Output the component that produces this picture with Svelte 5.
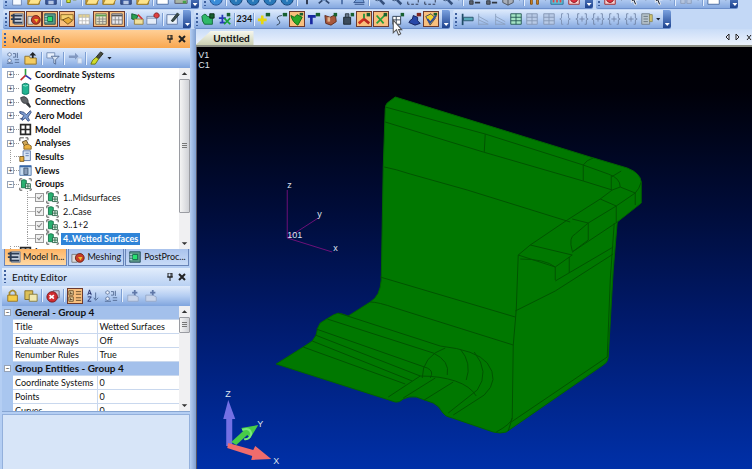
<script>
  // every icon is a list of [path, fill, stroke] on a 16x16 grid
  const icons = {
    page: [['M3 1h7l3 3v11H3z', '#f8fbff', '#6580b0'], ['M10 1v3h3', 'none', '#6580b0']],
    open: [['M1 4h5l1 2h7v8H1z', '#e0a830', '#8a6a20'], ['M1 14l3-6h12l-3 6z', '#ffe48a', '#9a7822']],
    save: [['M2 2h12v12H2z', '#3c5a9c', '#22386c'], ['M5 2h7v5H5z', '#d8e4f4', 'none'], ['M5 10h6v4H5z', '#b8c8e4', 'none']],
    link: [['M2 8h4v4H2zM9 5h4v4H9z', '#d8e83c', '#6c7c10'], ['M6 9l3-2', 'none', '#6c7c10']],
    window: [['M1 3h13v11H1z', '#fff', '#44679e'], ['M1 3h13v3H1z', '#5b8bd0', 'none']],
    print: [['M4 2h8v5H4z', '#fff', '#777'], ['M1 7h14v6H1z', '#a8b4a4', '#556'], ['M10 10h4v3h-4z', '#48a048', 'none']],
    globe: [['M8 1a7 7 0 1 0 .1 0z', '#3a8cd8', '#1a4c90'], ['M4 5l4-2 1 4-3 4z', '#bfe4f8', 'none']],
    ball: [['M8 1a7 7 0 1 0 .1 0z', '#2878b8', '#0c3a70'], ['M5 8h6M8 5v6', 'none', '#d8f0ff']],
    plus: [['M8 2v12M2 8h12', 'none', '#20283c', 2]],
    axes: [['M8 8V1M8 8l-6 5M8 8l6 5', 'none', '#304870', 2], ['M6 6h4v4H6z', '#88aee0', 'none']],
    lamp: [['M5 3h6v5H5z', '#a8c4e8', '#4a6ca4'], ['M8 9v5', 'none', '#4a6ca4', 2]],
    plane: [['M2 12l8-9 4 9z', '#78a0d8', '#33548c'], ['M3 14h11', 'none', '#23447c']],
    zoom: [['M6 2a4 4 0 1 0 .1 0z', '#d8ecff', '#35507c'], ['M9 9l5 5', 'none', '#35507c', 3]],
    dashbox: [['M2 3h3M7 3h3M12 3h2v3M14 9v3M14 14h-3M9 14H6M4 14H2v-3M2 8V5', 'none', '#222c44']],
    tools: [['M3 3h4v4H3zM3 10h4v4H3z', '#5d6470', '#30363f'], ['M9 5h6M9 12h6', 'none', '#30363f', 2]],
    cube: [['M8 2l6 3v7l-6 3-6-3V5z', '#a8aeb8', '#484e58'], ['M2 5l6 3 6-3M8 8v7', 'none', '#484e58']],
    pins: [['M3 3h4v4H6v7H4V7H3zM10 3h4v4h-1v7h-2V7h-1z', '#e09028', '#7c4808']],
    chart: [['M1 2h14v12H1z', '#58c4dc', '#2a6890'], ['M4 12V7M8 12V4M12 12V9', 'none', '#e04848', 2]],
    stop: [['M2 2h12v12H2z', '#f4d0d0', '#a02020'], ['M8 4a4 4 0 1 0 .1 0z', '#e03040', '#801018']],
    cursor: [['M5 1l8 8H9l2 5-2 1-2-5-2 2z', '#202838', '#fff']],
    faded: [['M2 5h5v8H2zM9 5h5v8H9z', '#b4c4de', '#8c9cb8'], ['M5 2h6', 'none', '#8c9cb8']],
    tree: [['M5 2h10v12H5z', '#c4cedc', '#707c90'], ['M1 4h13M1 8h12M4 12h10M4 2v11', 'none', '#2c3c54', 2]],
    mesh: [['M1 5h6v9H1z', '#dcdcdc', '#777'], ['M10 4a5 5 0 1 0 .1 0z', '#c83c28', '#642010'], ['M8 8l3 4 2-4z', '#f0c030', 'none']],
    post: [['M2 2h12v12H2z', '#5c9a88', '#244c5c'], ['M5 5h6v6H5z', '#28e070', '#106048'], ['M2 5h3M2 8h3M2 11h3', 'none', '#c0dce8']],
    form: [['M1 3h14v6H1z', '#f4d070', '#8a6420'], ['M3 9l7-3 4 4-5 4z', '#e8ac38', '#6a4c18']],
    grid: [['M2 3h12v11H2z', '#fff', '#aaa'], ['M2 3h12v3H2z', '#e8d48c', '#bba'], ['M2 10h12M6 3v11M10 3v11', 'none', '#bbb']],
    gridgrn: [['M2 2h12v12H2z', '#e4e4c8', '#706850'], ['M2 4h12', 'none', '#60a050', 2], ['M6 5v9M10 5v9M3 8h11M3 11h11', 'none', '#888']],
    gridgry: [['M2 2h12v12H2z', '#e8e8ee', '#5c5c68'], ['M2 4h12', 'none', '#555', 2], ['M6 5v9M10 5v9M3 9h11', 'none', '#888']],
    flag: [['M2 2l7 2-2 5-5-1z', '#28a050', '#0c5830'], ['M5 8h10v6H5z', '#f0e09c', '#907838'], ['M9 3l5 5', 'none', '#d03838', 2]],
    pinred: [['M1 5h11v9H1z', '#e4ecf8', '#6c84ac'], ['M12 1a3 3 0 1 0 .1 0z', '#e04040', '#801818'], ['M1 7h11', 'none', '#6c84ac']],
    note: [['M1 3h12v11H1z', '#e8f0fa', '#5c74a0'], ['M6 10l7-9 2 2-7 8z', '#3c4c50', '#20302c']],
    surf: [['M1 5q4-5 6 0l6 1v8H4q-3-3-3-9z', '#30b868', '#0c6434'], ['M10 2h5v5h-5z', '#186030', '#082810']],
    move: [['M5 3v9M1 7h8M2 12h6', 'none', '#2838b8', 2], ['M7 7l7 7M14 7l-7 7', 'none', '#18a038', 2], ['M10 1h4v4h-4z', '#186030', 'none']],
    yplus: [['M6 4v10M1 9h10', 'none', '#e8d810', 3], ['M10 1h5v4h-5z', '#186030', 'none']],
    curve: [['M9 4q-8 1-4 5t-2 6', 'none', '#283848', 1], ['M10 1h5v4h-5z', '#186030', 'none']],
    green: [['M1 4l4 2 3-3 6 3-5 9q-6-3-8-11z', '#28a828', '#0c6410'], ['M11 1h4v3h-4z', '#186030', 'none']],
    tee: [['M1 5h9M5 5v9', 'none', '#1828a0', 3], ['M10 1h5v4h-5z', '#186030', 'none']],
    brown: [['M1 4l6 2 6-3 1 8-6 4-6-2z', '#a8583c', '#5c2818'], ['M4 6h3v5H4z', '#e0b490', 'none'], ['M11 1h4v4h-4z', '#186030', 'none']],
    dark: [['M3 6h8v8H3z', '#3c4c5c', '#18242c'], ['M5 2h4v4H5z', '#68788c', '#28343c'], ['M11 1h4v4h-4z', '#186030', 'none']],
    tri: [['M8 9V2', 'none', '#189038', 2], ['M8 8l-6 5', 'none', '#d03020', 3], ['M8 8l6 5', 'none', '#b82820', 3], ['M11 1h4v4h-4z', '#186030', 'none']],
    cross: [['M3 4l8 9M12 4l-9 9', 'none', '#28a038', 2], ['M11 1h4v4h-4z', '#186030', 'none']],
    cells: [['M2 5h9v9H2zM6 5v9M2 9h9', '#fff', '#28384c'], ['M11 1h4v4h-4z', '#186030', 'none']],
    hat: [['M1 12q2-4 4-4l1-4 5 2v4l3 3-6 2z', '#2848a8', '#101c54'], ['M10 1h5v4h-5z', '#802820', 'none']],
    check: [['M2 5l6-3 5 5-6 8z', '#f0d030', '#38445c'], ['M4 8l3 4 7-8', 'none', '#2848a0', 2], ['M11 1h4v3h-4z', '#186030', 'none']],
    bar: [['M3 2v13', 'none', '#204c68', 2], ['M4 6h11v4H4z', '#58a8b8', '#285068']],
    slant: [['M3 2v13M3 5l11 6M3 9l11 5M3 14h11', 'none', '#8ba0bf']],
    table: [['M2 2h12v12H2z', '#a4e4c4', '#205450'], ['M8 2v12M2 6h12M2 10h12', 'none', '#205450']],
    tablegry: [['M2 2h12v12H2z', '#b8cae6', '#8496b4'], ['M8 2v12M2 6h12M2 10h12', 'none', '#8496b4']],
    brace: [['M6 2H4v5L2 8l2 1v5h2M10 2h2v5l2 1-2 1v5h-2', 'none', '#7c90b2']],
    bracep: [['M5 2H3v5L1 8l2 1v5h2M11 2h2v5l2 1-2 1v5h-2M8 5v6M5 8h6', 'none', '#7083a6']],
    list: [['M2 2h9v12H2z', '#b8c4cc', '#707c88'], ['M11 3h3v8h-3z', '#d8c870', '#88885c'], ['M4 5h5M4 8h5M4 11h5', 'none', '#62707c']],
    find: [['M4 2a2 2 0 1 0 .1 0zM4 9a2 2 0 1 0 .1 0z', '#eef4ff', '#506890'], ['M8 3h3v4H8M10 10h5M10 13h5M13 2v6M1 14h7', 'none', '#506890']],
    folderup: [['M1 6h5l1 2h7v7H1z', '#f4cc60', '#8c6c24'], ['M10 1l4 4h-3v3H9V5H6z', '#202428', 'none']],
    filter: [['M1 2h9v6H1z', '#e8f0fc', '#7088b0'], ['M6 6h9l-4 4v5l-2-1v-4z', '#d8e4f4', '#506890']],
    arrow: [['M1 5h7V2l4 4-4 4V8H1z', '#8298c0', 'none'], ['M11 8h5v6h-5z', '#dce8f8', '#b0c0dc']],
    brush: [['M12 1l3 2-5 6-3-2z', '#484c40', '#20241c'], ['M7 7l3 2-4 6H1q1-5 6-8z', '#d0dc28', '#606c10']],
    coord: [['M8 9V1', 'none', '#30a040', 2], ['M8 9l-6 6', 'none', '#c03030', 2], ['M8 9l7 5', 'none', '#3038b0', 2]],
    geom: [['M4 3q4-3 8 0v11q-4 3-8 0z', '#20b490', '#08705c'], ['M5 4q3 2 6 0', 'none', '#a8f0dc']],
    conn: [['M2 2q5-3 8 1 3 5-1 6-6 1-7-7z', '#606468', '#34383c'], ['M9 9l5 5M11 8l3 6', 'none', '#34383c', 2]],
    aero: [['M1 3l5 1 3 3 5-5 1 2-4 6 2 4-2 1-3-4-4 3-1-2 3-4-5-3z', '#7c9cd0', '#2c4478'], ['M1 12h4', 'none', '#2c4478']],
    model: [['M2 2h12v12H2zM8 2v12M2 8h12', '#fff', '#282828', 2]],
    anal: [['M1 1h5M8 1h3v3M1 1v4', 'none', '#303030'], ['M4 6l5-2 2 4-4 4z', '#d0a858', '#503c18'], ['M6 11q4-4 9 0v4H6z', '#e8b040', '#7c5818']],
    result: [['M5 1h9v12H5z', '#d8e4f4', '#4868a0'], ['M1 8h5v6H1z', '#e8b040', '#705018'], ['M8 4h4M8 7h4', 'none', '#4868a0']],
    views: [['M1 2h14v12H1z', '#c8dcf0', '#4870a8'], ['M1 3h14', 'none', '#3868a8', 2], ['M6 5h5v8H6z', '#889cb8', '#38506c']],
    group: [['M3 3q3-2 6 0v9H3z', '#28b070', '#0c6840'], ['M8 7h6v6H8zM11 7v6M8 10h6', '#e8f4ec', '#205c40'], ['M1 4V1h3M12 1h3v3M1 12v3h3M15 13v2h-2', 'none', '#303030']],
    lock: [['M4 7V4q4-5 7 0v3', 'none', '#a48c34', 2], ['M2 7h11v7H2z', '#f4cc48', '#94701c']],
    copy: [['M1 2h9v10H1z', '#dcc058', '#846c20'], ['M6 6h9v8H6z', '#f0e8b0', '#84783c']],
    red: [['M8 2h7v8H8z', '#c8ccd8', '#667'], ['M7 3a6 6 0 1 0 .1 0z', '#d02c30', '#701418'], ['M4 7l5 4M9 7l-5 4', 'none', '#fff', 2]],
    cat: [['M1 2h5v5H1zM1 9h5v5H1z', '#f4dca8', '#604828'], ['M3 3v3M2 5h3M3 10v3M2 12h3', 'none', '#604828'], ['M9 3h6M9 6h6M9 10h6M9 13h6', 'none', '#604828']],
    sort: [['M2 7l2-6 2 6M3 5h3M2 9h4l-4 5h4', 'none', '#202c68'], ['M11 4v8M9 10l2 3 3-3', 'none', '#506890']],
    hand: [['M2 7h8l4 2v5H2z', '#c8d4ea', '#96a8c8'], ['M10 1v6M7 4h6', 'none', '#6078a8', 2]]
  };

  const fileBar = ['page', 'open', 'save', '|', 'link', '|', 'open', 'open', 'save', 'open', '|', 'window', 'print'];
  const viewBar = ['globe', '|', 'ball', 'ball', 'ball', 'ball', '|', 'plus', 'axes', 'lamp', 'plane', '|', 'zoom', 'zoom',
    'dashbox', 'dashbox', 'zoom', 'v', '|', 'tools', 'tools', 'cube', 'v', '|', 'pins', 'v', 'chart', 'stop'];
  const selectBar = ['stop', 'v', 'cursor', 'v', 'cursor', 'v', '|', 'faded', 'v', '|', 'window', 'v'];
  const paneBar = ['tree*', 'mesh*', 'post*', 'form*', 'grid', 'gridgrn*', 'gridgry*', '|', 'flag', 'pinred', '|', 'note'];
  const entityBar = ['surf', 'move', '|', '#', '|', 'yplus', 'curve', 'green*', 'tee', 'brown', 'dark', 'tri*', 'cross*', 'cells', 'hat', 'check*'];
  const meshBar = ['bar', 'slant', 'slant', 'table', 'tablegry', 'tablegry', 'brace', 'bracep', 'bracep', 'bracep', 'bracep', 'list', 'v'];

  const nodes = [
    { label: 'Coordinate Systems', icon: 'coord' },
    { label: 'Geometry', icon: 'geom' },
    { label: 'Connections', icon: 'conn' },
    { label: 'Aero Model', icon: 'aero' },
    { label: 'Model', icon: 'model' },
    { label: 'Analyses', icon: 'anal' },
    { label: 'Results', icon: 'result', leaf: true },
    { label: 'Views', icon: 'views' },
    { label: 'Groups', icon: 'group', open: true }
  ];
  const groups = ['1..Midsurfaces', '2..Case', '3..1+2', '4..Wetted Surfaces'];
  let active = $state(3);

  const sections = [
    { title: 'General - Group 4', rows: [['Title', 'Wetted Surfaces'], ['Evaluate Always', 'Off'], ['Renumber Rules', 'True']] },
    { title: 'Group Entities - Group 4', rows: [['Coordinate Systems', '0'], ['Points', '0'], ['Curves', '0']] }
  ];
</script>

{#snippet icon(name)}
  <svg class="icon" viewBox="0 0 16 16" aria-hidden="true">
    {#each icons[name] as [d, fill, stroke, w]}
      <path {d} {fill} {stroke} stroke-width={w ?? 1} />
    {/each}
  </svg>
{/snippet}

{#snippet bar(items, cls)}
  <div class="bar {cls}" role="toolbar">
    <span class="grip"></span>
    <div class="items">
      {#each items as item}
        {#if item === '|'}
          <span class="sep"></span>
        {:else if item === 'v'}
          <button class="drop" aria-label="More"></button>
        {:else if item === '#'}
          <button class="tool num">234</button>
        {:else}
          <button class="tool" class:on={item.endsWith('*')} aria-label={item.replace('*', '')}>
            {@render icon(item.replace('*', ''))}
          </button>
        {/if}
      {/each}
    </div>
    <button class="end" aria-label="Toolbar options"></button>
  </div>
{/snippet}

{#snippet title(text, cls)}
  <header class="title {cls}">
    <span class="grip"></span>
    <h2>{text}</h2>
    <button class="pin" aria-label="Pin">
      <svg viewBox="0 0 8 8"><path d="M2 0h4v4H2zM1 4h6M4 4v4" fill="none" stroke="#222" /><path d="M5 0v4" stroke="#222" /></svg>
    </button>
    <button class="pin" aria-label="Close">
      <svg viewBox="0 0 8 8"><path d="M1 1l6 6M7 1l-6 6" stroke="#222" stroke-width="2" /></svg>
    </button>
  </header>
{/snippet}

{#snippet scroll(cls)}
  <div class="scroll {cls}">
    <svg viewBox="0 0 8 8"><path d="M2 5l2-2 2 2z" fill="#333" /></svg>
    <span class="thumb"></span>
    <svg viewBox="0 0 8 8"><path d="M2 3l2 2 2-2z" fill="#333" /></svg>
  </div>
{/snippet}

<div class="app">
  <div class="bars top">
    {@render bar(fileBar, 'file')}
    {@render bar(viewBar, 'view')}
    {@render bar(selectBar, 'select')}
  </div>
  <div class="bars">
    {@render bar(paneBar, 'pane')}
    {@render bar(entityBar, 'entity')}
    {@render bar(meshBar, 'mesh')}
  </div>

  <div class="main">
    <aside>
      {@render title('Model Info', 'hot')}
      <div class="strip">
        <button class="tool" aria-label="Find">{@render icon('find')}</button>
        <button class="tool" aria-label="Up">{@render icon('folderup')}</button>
        <span class="sep"></span>
        <button class="tool" aria-label="Filter">{@render icon('filter')}</button>
        <span class="sep"></span>
        <button class="tool" aria-label="Next">{@render icon('arrow')}</button>
        <span class="sep"></span>
        <button class="tool" aria-label="Brush">{@render icon('brush')}</button>
        <button class="drop" aria-label="More"></button>
      </div>

      <div class="treebox">
        <ul class="tree">
          {#each nodes as n}
            <li>
              {#if n.leaf}<span class="twig leaf"></span>{:else}<button class="twig" aria-label={n.label}>{n.open ? '−' : '+'}</button>{/if}
              <span class="dash"></span>
              {@render icon(n.icon)}
              <b>{n.label}</b>
            </li>
          {/each}
          {#each groups as g, i}
            <li class="sub">
              <span class="branch"></span>
              <input type="checkbox" id="g{i}" checked />
              {@render icon('group')}
              <label for="g{i}" class:active={active === i}>{g}</label>
            </li>
          {/each}
          <li class="cut">
            <span class="twig leaf"></span>
            <span class="dash"></span>
            {@render icon('model')}
            <b>Layers</b>
          </li>
        </ul>
        {@render scroll('long')}
      </div>

      <nav class="tabs">
        <button class="tab cur">{@render icon('tree')}Model In...</button>
        <button class="tab">{@render icon('mesh')}Meshing</button>
        <button class="tab">{@render icon('post')}PostProc...</button>
      </nav>

      {@render title('Entity Editor', 'cool')}
      <div class="strip">
        <button class="tool" aria-label="Lock">{@render icon('lock')}</button>
        <button class="tool" aria-label="Copy">{@render icon('copy')}</button>
        <span class="sep"></span>
        <button class="tool" aria-label="Reject">{@render icon('red')}</button>
        <span class="sep"></span>
        <button class="tool on" aria-label="Categories">{@render icon('cat')}</button>
        <button class="tool" aria-label="Sort">{@render icon('sort')}</button>
        <button class="tool" aria-label="Find">{@render icon('find')}</button>
        <span class="sep"></span>
        <button class="tool" aria-label="Apply">{@render icon('hand')}</button>
        <button class="tool" aria-label="Apply all">{@render icon('hand')}</button>
      </div>

      <div class="props">
        <table>
          <colgroup>
            <col class="c1" />
            <col class="c2" />
            <col />
          </colgroup>
          <tbody>
            {#each sections as s}
              <tr class="head">
                <td class="gut"><button class="twig" aria-label={s.title}>−</button></td>
                <th colspan="2">{s.title}</th>
              </tr>
              {#each s.rows as [key, value]}
                <tr><td class="gut"></td><td class="key">{key}</td><td>{value}</td></tr>
              {/each}
            {/each}
          </tbody>
        </table>
        {@render scroll('short')}
      </div>
      <div class="help"></div>
    </aside>

    <section>
      <div class="docs">
        <button class="doc">Untitled</button>
        <span class="arrows">
          <svg viewBox="0 0 28 8"><path d="M5 1v6L2 4zM12 1v6l3-3z" fill="#eef" stroke="#222" /><path d="M23 2l4 5M27 2l-4 5" stroke="#222" /></svg>
        </span>
      </div>
      <div class="stage">
        <svg viewBox="197 47 555 422" preserveAspectRatio="xMidYMid meet">
          <g class="hud">
            <text x="198" y="58">V1</text>
            <text x="198" y="68">C1</text>
          </g>

          <path fill="#007800" stroke="#006400" d="M395 97L387 103Q385 105 385 109L383 167 381 280Q380 296 370 302L348 316 342 314Q338 312 333 315L320 323Q317 327 316 335L312 341 303 347 276 364 395 402Q399 403 403 399 408 396 416 397L433 403Q439 406 442 412 445 417 452 418L493 432Q500 434 506 432L603 365Q608 362 608 357L613 270 617 222 641 203V182Q640 173 627 168L590 157Z" />
          <g class="edges">
            <path d="M385 107L485 134 583 165 608 174Q620 178 620 187L612 190" />
            <path d="M385 122L483 152 583 181 612 190M485 134L484 152M583 181V165Q586 160 593 158M611 176V190M621 171L611 177" />
            <path d="M384 167Q395 169 410 174L467 190 570 222" />
            <path d="M612 190L600 199 567 220 530 245 518 255M620 187L635 193 616 206 600 199M635 193V205M641 182Q639 189 635 193" />
            <path d="M616 206V222M616 206L588 223 572 219M588 223V240M588 223L575 234Q568 237 572 251M588 240L572 252 617 222" />
            <path d="M530 245L572 255 555 267 518 255M555 267V280M569 257V273M555 281L613 247M555 267Q545 259 520 259" />
            <path d="M518 255L516 310 513 345 512 418Q511 424 496 432M614 223L610 280 607 357 511 422M512 418L508 431" />
            <path d="M380 277L515 317M370 302Q378 302 395 308L513 345M515 311L555 291 613 254" />
            <path d="M338 313L440 346Q476 350 487 363 500 380 484 395L453 415" />
            <path d="M327 319L433 353Q450 361 447 375M316 329L427 368Q434 371 430 378M315 335L420 376M312 341L412 381M303 347L405 384" />
            <path d="M445 348Q422 356 422 378M460 349Q472 363 466 380M474 352Q490 372 477 390L448 413" />
            <path d="M388 397L420 376Q440 376 455 381 470 386 476 396M403 398L435 378M424 400L453 382" />
          </g>

          <path class="frame" d="M287 190V238L332 252M287 238L318 218" />
          <g class="hud">
            <text x="287" y="188">z</text>
            <text x="317" y="217">y</text>
            <text x="333" y="251">x</text>
            <text x="287" y="238">101</text>
            <text x="225" y="397">Z</text>
            <text x="257" y="427">Y</text>
            <text x="273" y="464">X</text>
          </g>

          <path fill="#7470e4" d="M226 446V419H223L228 400 235 419H232V446Z" />
          <path fill="#48cc48" d="M231 442L243 431 241 428 258 425 250 438 247 435 236 445Z" />
          <path fill="none" stroke="#78ec78" stroke-width="2" d="M242 430q8-3 9 4-2 6-7 5" />
          <path fill="#f06c6c" d="M228 443L253 450 255 446 271 459 251 460 252 456 227 448Z" />
        </svg>
      </div>
    </section>
  </div>

  <svg class="mouse" viewBox="0 0 10 16"><path d="M1 1v12l3-3 2 5 2-1-2-4h3z" fill="#fff" stroke="#555" /></svg>
</div>

<style>
:global(body){
  margin: 0;
}

.app{
  position: relative;
  display: flex;
  flex-direction: column;
  height: 100vh;
  overflow: hidden;
  background: #c3d8f6;
  font-family: Lato, "Open Sans", sans-serif;
  font-size: 9px;
  line-height: 12px;
  color: #111;
}

button{
  padding: 0;
  margin: 0;
  border: none;
  background: none;
  font: inherit;
  color: inherit;
}

h2{
  margin: 0;
  font-size: 10px;
  font-weight: normal;
}

.icon{
  width: 14px;
  height: 14px;
  flex: none;
  display: block;
}

/* toolbars */
.bars{
  display: flex;
  height: 19px;
  flex: none;
}

.bars.top{
  height: 9px;
  align-items: flex-end;
  overflow: hidden;
  margin-bottom: 1px;
}

.bar{
  display: flex;
  align-items: center;
  height: 19px;
  flex: none;
  box-sizing: border-box;
  margin-left: 3px;
  border-radius: 2px;
  background: linear-gradient(#dce9fb, #b4cdf2 50%, #86a9e0);
  border-bottom: 1px solid #6c8fcb;
}

.file{ width: 26%; }
.view{ width: 52%; }
.select{ width: 19%; }
.pane{ width: 25%; }
.entity{ width: 34%; }
.mesh{ width: 29%; }

.grip{
  width: 2px;
  height: 13px;
  margin: 0 2px;
  flex: none;
  background: repeating-linear-gradient(#3d5f9e 0 2px, transparent 2px 4px);
}

.items{
  display: flex;
  flex: 1;
  justify-content: space-between;
  align-items: center;
  min-width: 0;
}

.tool{
  display: flex;
  align-items: center;
  justify-content: center;
  box-sizing: border-box;
  width: 16px;
  height: 16px;
  flex: none;
}

.tool.on{
  border: 1px solid #6b3a30;
  background: #f9bf7c;
}

.num{
  font-weight: bold;
}

.sep{
  width: 1px;
  height: 13px;
  flex: none;
  background: #7d9fd4;
  border-right: 1px solid #e6f0fd;
}

.drop{
  width: 5px;
  height: 3px;
  flex: none;
  background: #1c2433;
  clip-path: polygon(0 0, 100% 0, 50% 100%);
}

.end{
  width: 8px;
  height: 100%;
  margin-left: 2px;
  flex: none;
  border-radius: 0 2px 2px 0;
  background: linear-gradient(#7ba2e0, #1c428e);
  position: relative;
}

.end::after{
  content: "";
  position: absolute;
  left: 2px;
  bottom: 2px;
  width: 5px;
  height: 3px;
  background: #fff;
  clip-path: polygon(0 0, 100% 0, 50% 100%);
}

/* left column */
.main{
  display: flex;
  flex: 1;
  min-height: 0;
}

aside{
  display: flex;
  flex-direction: column;
  width: 26%;
  flex: none;
  box-sizing: border-box;
  padding: 1px 6px 0 2px;
  background: linear-gradient(90deg, #b4cef3 97%, #7f9fd0);
}

.title{
  display: flex;
  align-items: center;
  height: 18px;
  flex: none;
}

.title.cool{
  margin-top: 2px;
  background: linear-gradient(#e2edfc, #b9d1f3);
}

.title.hot{
  background: linear-gradient(#ffcf96, #f8a750);
}

.title h2{
  flex: 1;
  margin-left: 4px;
}

.pin{
  width: 8px;
  height: 8px;
  margin-right: 4px;
}

.pin svg{
  display: block;
}

.strip{
  display: flex;
  align-items: center;
  gap: 2px;
  height: 20px;
  flex: none;
  padding-left: 3px;
  background: linear-gradient(#e0ebfb, #b4cdf2 50%, #80a5de);
}

.treebox{
  display: flex;
  flex: 180;
  min-height: 0;
  overflow: hidden;
  background: #fff;
}

.tree{
  flex: 1;
  min-width: 0;
  margin: 0;
  padding: 0 0 0 5px;
  list-style: none;
  display: grid;
  grid-template-rows: repeat(13, minmax(0, 5fr)) minmax(0, 1fr);
  overflow: hidden;
}

.tree li{
  display: flex;
  align-items: center;
  white-space: nowrap;
}

.tree .icon{
  width: 13px;
  height: 13px;
}

.tree b{
  margin-left: 3px;
}

.twig{
  width: 7px;
  height: 7px;
  box-sizing: border-box;
  flex: none;
  border: 1px solid #97a3b6;
  background: #fff;
  font-size: 7px;
  line-height: 5px;
  text-align: center;
}

.leaf{
  border: none;
  border-left: 1px dotted #999;
  margin-left: 3px;
  width: 4px;
  height: 13px;
}

.dash{
  width: 5px;
  border-top: 1px dotted #999;
}

.sub .branch{
  width: 7px;
  height: 13px;
  margin-left: 20px;
  border-left: 1px dotted #999;
  background: linear-gradient(#bbb, #bbb) center / 100% 1px no-repeat;
}

.sub input{
  appearance: none;
  width: 9px;
  height: 9px;
  box-sizing: border-box;
  margin: 0 2px 0 0;
  flex: none;
  border: 1px solid #999;
  background: #f0f0f0;
}

.sub input:checked::after{
  content: "";
  display: block;
  width: 2px;
  height: 4px;
  margin: 0 0 0 2px;
  border: solid #888;
  border-width: 0 1px 1px 0;
  transform: rotate(40deg);
}

.sub label{
  margin-left: 2px;
  padding: 0 2px;
}

.sub .active{
  background: #2f84d8;
  color: #fff;
  font-weight: bold;
}

.tree .cut{
  overflow: hidden;
  align-items: flex-start;
}

.scroll{
  display: flex;
  flex-direction: column;
  width: 11px;
  flex: none;
  background: #f0f0f2;
}

.scroll svg{
  width: 11px;
  height: 11px;
  flex: none;
}

.scroll svg:last-child{
  margin-top: auto;
}

.thumb{
  box-sizing: border-box;
  border: 1px solid #9a9ca2;
  border-radius: 1px;
  background:
    repeating-linear-gradient(#777 0 1px, transparent 1px 2px) center / 5px 5px no-repeat,
    linear-gradient(90deg, #f4f4f4, #cfd1d6);
}

.long .thumb{
  height: 74%;
}

.short .thumb{
  height: 16px;
}

.tabs{
  display: flex;
  gap: 1px;
  height: 17px;
  flex: none;
  padding: 0 2px;
}

.tab{
  display: flex;
  align-items: center;
  gap: 2px;
  padding: 0 2px;
  flex: 1 1 auto;
  white-space: nowrap;
  border: 1px solid #6884b8;
  border-top: none;
  background: linear-gradient(#a9c2ec, #c8dbf7);
}

.tab.cur{
  background: linear-gradient(#fdb465, #ffd9a4);
}

.props{
  display: flex;
  flex: 105;
  min-height: 0;
  overflow: hidden;
  background: #fff;
  border-bottom: 1px solid #86a5d2;
}

table{
  flex: 1;
  align-self: flex-start;
  border-collapse: collapse;
  table-layout: fixed;
}

.c1{
  width: 11px;
}

.c2{
  width: 84px;
}

td, th{
  height: 13px;
  padding: 0 0 0 2px;
  line-height: 13px;
  text-align: left;
  white-space: nowrap;
  border-bottom: 1px solid #c9d8ee;
}

.key{
  border-right: 1px solid #c9d8ee;
}

.gut{
  background: #a9c6ef;
  border-color: #a9c6ef;
}

.gut .twig{
  display: block;
}

.head th{
  background: #a3c0eb;
  font-size: 10px;
}

.help{
  flex: 54;
  margin-top: 2px;
  border: 1px solid #93b0dc;
  border-bottom: none;
  background: #d7e5f8;
}

/* document area */
section{
  display: flex;
  flex-direction: column;
  flex: 1;
  min-width: 0;
}

.docs{
  display: flex;
  align-items: flex-end;
  justify-content: space-between;
  height: 16px;
  flex: none;
  background: linear-gradient(#c9dcf7, #edf3fd);
  border-bottom: 2px solid #8d9086;
}

.doc{
  width: 58px;
  height: 14px;
  padding-left: 14px;
  text-align: center;
  font-weight: bold;
  font-size: 10px;
  background: linear-gradient(#f6f7ee, #ccd1b4);
  clip-path: polygon(0 100%, 15px 0, 100% 0, 100% 100%);
}

.arrows{
  width: 28px;
  height: 12px;
}

.arrows svg{
  display: block;
}

.stage{
  flex: 1;
  min-height: 0;
  border-left: 1px solid #556;
  background: linear-gradient(#000004, #000008 10%, #000c38 38%, #001a6c 65%, #0030a8);
}

.stage svg{
  display: block;
  width: 100%;
  height: 100%;
}

.hud{
  fill: #dfe4ee;
  font-family: "Liberation Sans", Arial, sans-serif;
  font-size: 9px;
}

.edges{
  fill: none;
  stroke: #005400;
}

.frame{
  fill: none;
  stroke: #6c1078;
}

.mouse{
  position: absolute;
  left: 392px;
  top: 19px;
  width: 11px;
  height: 17px;
}
</style>
